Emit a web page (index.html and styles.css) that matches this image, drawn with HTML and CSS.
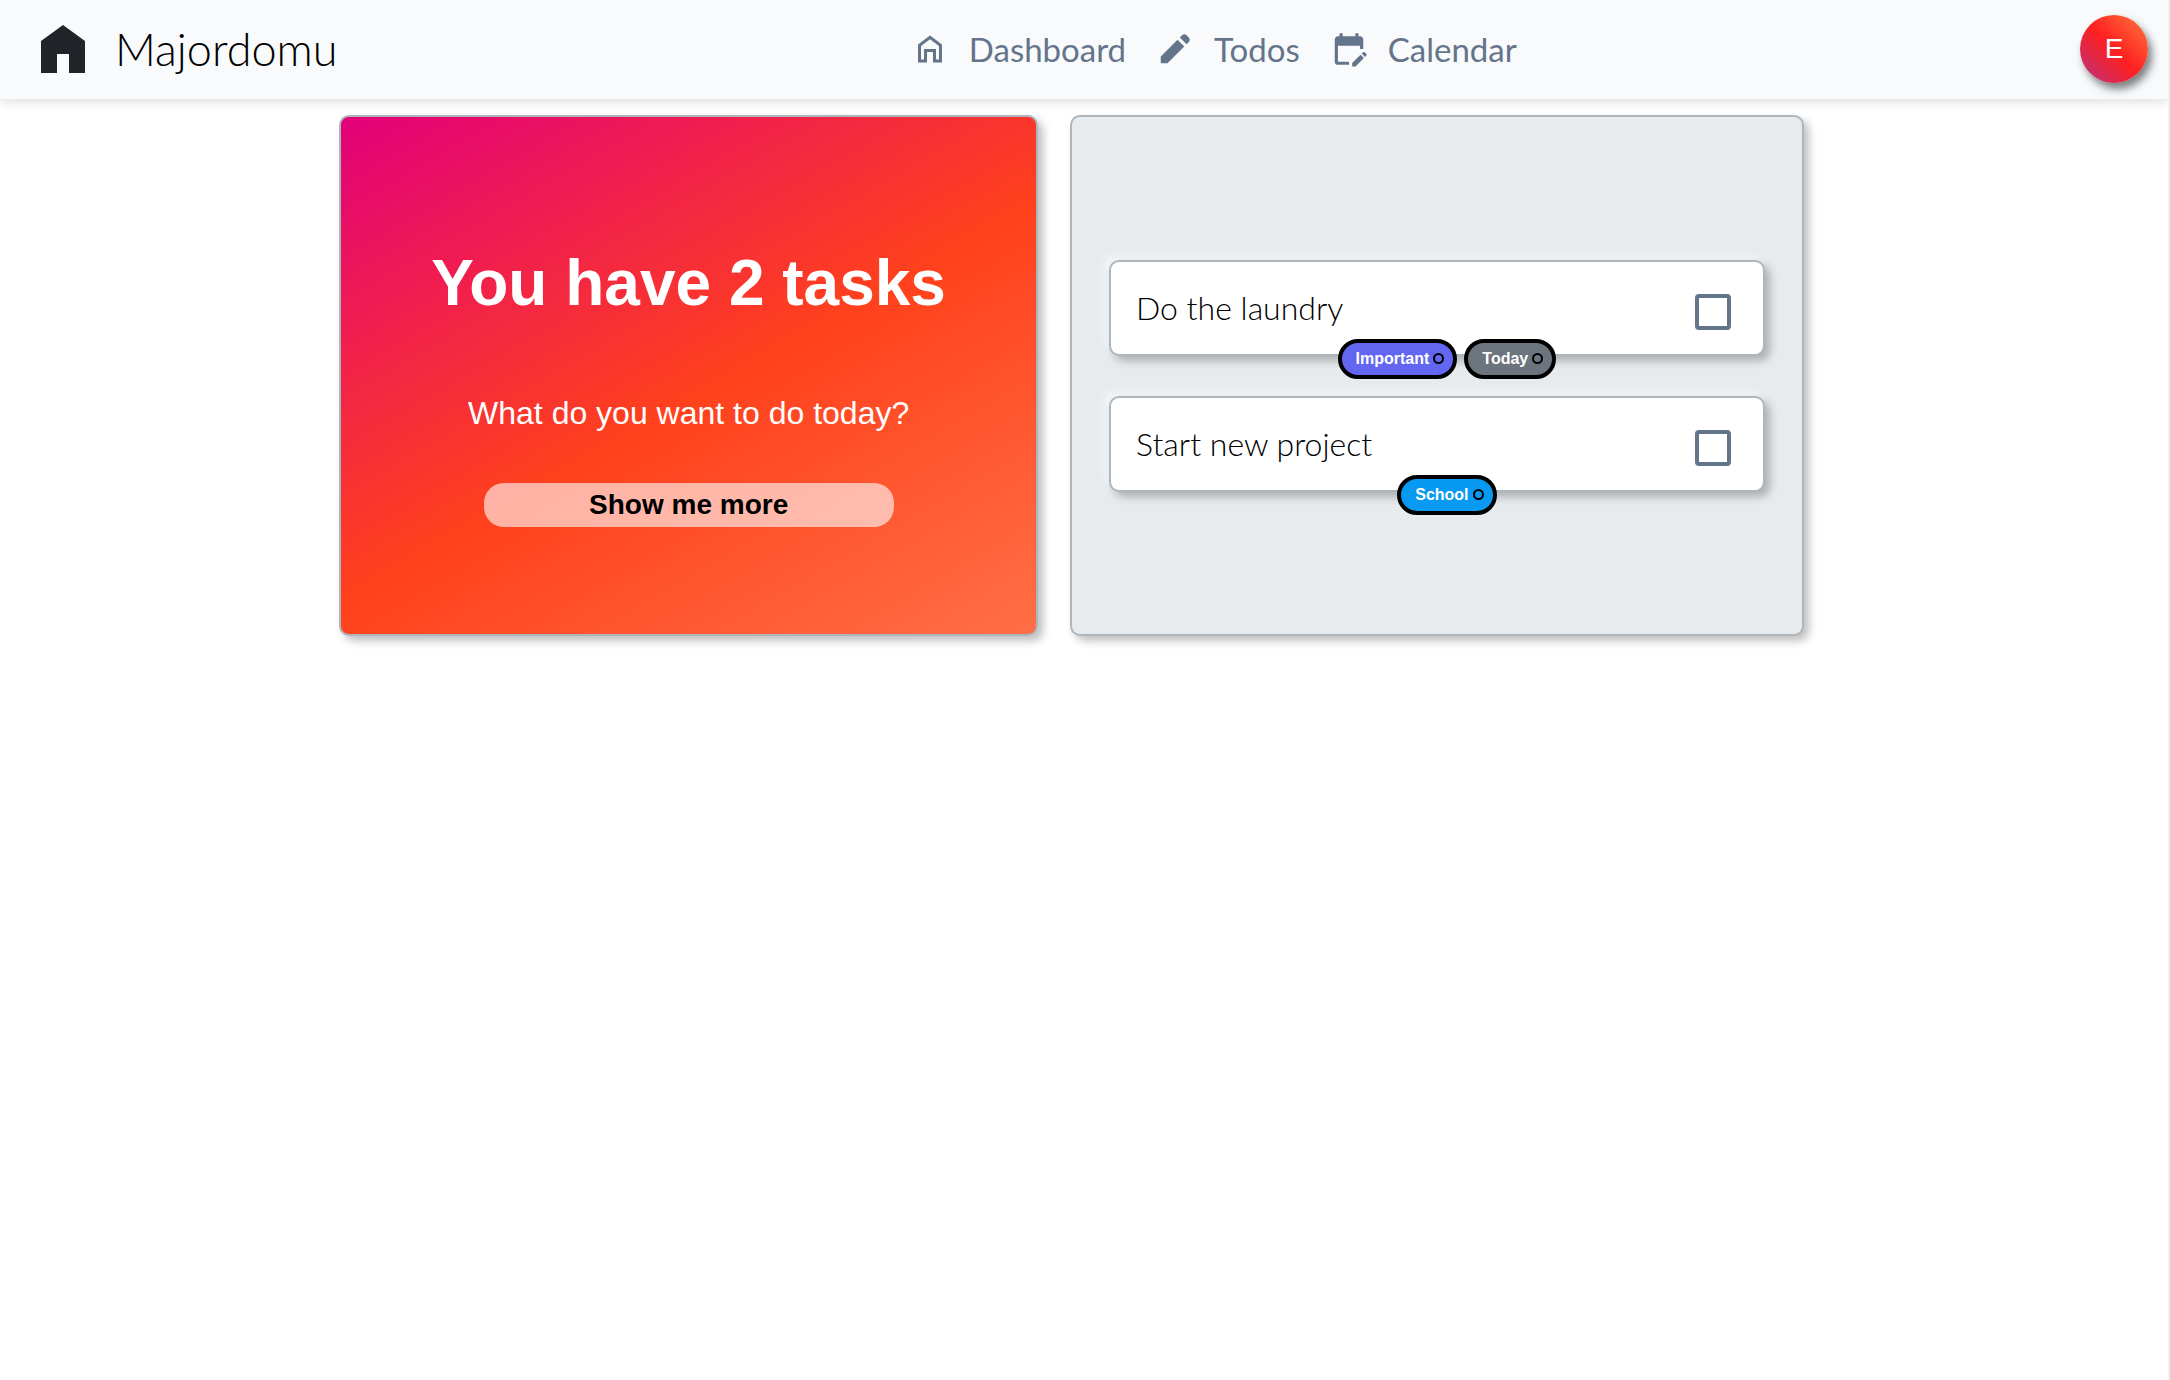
FILE: index.html
```html
<!DOCTYPE html>
<html lang="en">
<head>
<meta charset="utf-8">
<title>Majordomu</title>
<link rel="stylesheet" href="styles.css">
</head>
<body>
<header class="topbar">
  <a class="brand" href="#">
    <svg class="brand-icon" viewBox="0 0 44 48" aria-hidden="true"><path d="M22 0 44 16V48H28V29H16V48H0V16Z"/></svg>
    <span>Majordomu</span>
  </a>
  <nav class="nav">
    <a class="nav-link" href="#">
      <svg class="nav-icon" viewBox="-0.7 -0.7 25.4 25.4" aria-hidden="true"><path d="M4 21V9l8-6 8 6v12h-6v-7h-4v7zM6 19h2v-7h8v7h2v-9l-6-4.500-6 4.500z"/></svg>
      <span>Dashboard</span>
    </a>
    <a class="nav-link" href="#">
      <svg class="nav-icon" viewBox="0 0 24 24" aria-hidden="true"><path d="M19.300 8.925 15.050 4.725 16.450 3.325q.575-.575 1.413-.575t1.412.575l1.400 1.400q.575.575.6 1.388t-.55 1.387zM17.850 10.400 7.250 21H3v-4.250l10.600-10.600z"/></svg>
      <span>Todos</span>
    </a>
    <a class="nav-link" href="#">
      <svg class="nav-icon" viewBox="0 0 24 24" aria-hidden="true"><path d="M5 22q-.825 0-1.413-.587T3 20V6q0-.825.587-1.413T5 4h1V2h2v2h8V2h2v2h1q.825 0 1.413.587T21 6v6h-2v-2H5v10h7v2zM22.125 17 20 14.875l.725-.725q.275-.275.700-.275t.7.275l.725.725q.275.275.275.7t-.275.7zM14 23v-2.125l5.300-5.300 2.125 2.125-5.300 5.300z"/></svg>
      <span>Calendar</span>
    </a>
  </nav>
  <button class="avatar" type="button" aria-label="Account">E</button>
</header>
<main class="board">
  <section class="panel summary">
    <h1 class="summary-title">You have 2 tasks</h1>
    <p class="summary-text">What do you want to do today?</p>
    <button class="more" type="button">Show me more</button>
  </section>
  <section class="panel tasks">
    <article class="task">
      <label class="task-name" for="task-1">Do the laundry</label>
      <input class="task-check" type="checkbox" id="task-1">
      <div class="tags">
        <span class="tag tag-important">Important<i class="dot"></i></span>
        <span class="tag tag-today">Today<i class="dot"></i></span>
      </div>
    </article>
    <article class="task">
      <label class="task-name" for="task-2">Start new project</label>
      <input class="task-check" type="checkbox" id="task-2">
      <div class="tags">
        <span class="tag tag-school">School<i class="dot"></i></span>
      </div>
    </article>
  </section>
</main>
</body>
</html>
```
FILE: styles.css
```css
* { box-sizing: border-box; }

body {
  margin: 0;
  min-height: 100vh;
  border-right: 2px solid #f1f1f1;
  background: #fff;
  font-family: "Liberation Sans", Arial, sans-serif;
}

.topbar {
  display: flex;
  align-items: center;
  justify-content: space-between;
  height: 99px;
  padding: 0 20px 2px 41px;
  background: #f8fafc;
  box-shadow: 0 2px 12px rgba(0, 0, 0, 0.15);
}

.brand {
  display: flex;
  align-items: center;
  gap: 30px;
  color: #000;
  font-family: Lato, "Liberation Sans", sans-serif;
  font-size: 45px;
  font-weight: 300;
  text-decoration: none;
}

.brand-icon { width: 44px; height: 48px; fill: #212529; }

.nav { display: flex; gap: 30px; padding-left: 10px; }

.nav-link {
  display: flex;
  align-items: center;
  gap: 20px;
  color: #64748b;
  font-family: Lato, "Liberation Sans", sans-serif;
  font-size: 33px;
  text-decoration: none;
}

.nav-icon { width: 38px; height: 38px; fill: currentColor; }

.avatar {
  width: 68px;
  height: 68px;
  padding: 0;
  border: 0;
  border-radius: 50%;
  background: linear-gradient(45deg, #b83280, #ff2020 50%, #ff7a3d);
  box-shadow: 4px 6px 8px rgba(0, 0, 0, 0.5);
  color: #fff;
  font-family: inherit;
  font-size: 28px;
}

.board {
  display: grid;
  grid-template-columns: 698fr 733fr;
  gap: 32px;
  padding: 16px 16.800% 0 15.650%;
}

.panel {
  display: flex;
  flex-direction: column;
  justify-content: center;
  min-height: 521px;
  border: 2px solid #adb5bd;
  border-radius: 10px;
  box-shadow: 5px 5px 8px rgba(0, 0, 0, 0.25);
}

.summary {
  align-items: center;
  padding-top: 22px;
  background: linear-gradient(150deg, #e3007a, #ff411c 53%, #ff6f47);
  color: #fff;
}

.summary-title { margin: 0 0 76px; font-size: 64px; line-height: 72px; }
.summary-text { margin: 0 0 52px; font-size: 32px; line-height: 36px; }

.more {
  width: 59%;
  height: 44px;
  padding: 0;
  border: 0;
  border-radius: 20px;
  background: rgba(255, 255, 255, 0.6);
  color: #000;
  font: bold 28px "Liberation Sans", Arial, sans-serif;
}

.tasks { gap: 40px; padding: 0 37px; background: #e7ebee; }

.task {
  position: relative;
  display: flex;
  align-items: center;
  justify-content: space-between;
  height: 96px;
  padding: 0 32px 0 25px;
  border: 2px solid #adb5bd;
  border-radius: 10px;
  background: #fff;
  box-shadow: 5px 5px 8px rgba(0, 0, 0, 0.25), -5px -5px 8px rgba(255, 255, 255, 0.5);
}

.task-name {
  color: #000;
  font-family: Lato, "Liberation Sans", sans-serif;
  font-size: 32px;
  font-weight: 300;
}

.task-check {
  appearance: none;
  width: 36px;
  height: 36px;
  margin: 8px 0 0;
  border: 4px solid #64748b;
  border-radius: 4px;
}

.tags {
  position: absolute;
  top: 77px;
  right: 0;
  left: 20px;
  display: flex;
  justify-content: center;
  gap: 7px;
}

.tag {
  display: flex;
  align-items: center;
  gap: 4px;
  height: 40px;
  padding: 0 9px 0 14px;
  border: 4px solid #000;
  border-radius: 20px;
  color: #fff;
  font-size: 16px;
  font-weight: bold;
}

.tag-important { background: #6366f1; }
.tag-today { background: #6c757d; }
.tag-school { background: #0899f3; }

.dot { width: 11px; height: 11px; border: 2px solid #000; border-radius: 50%; }
```
